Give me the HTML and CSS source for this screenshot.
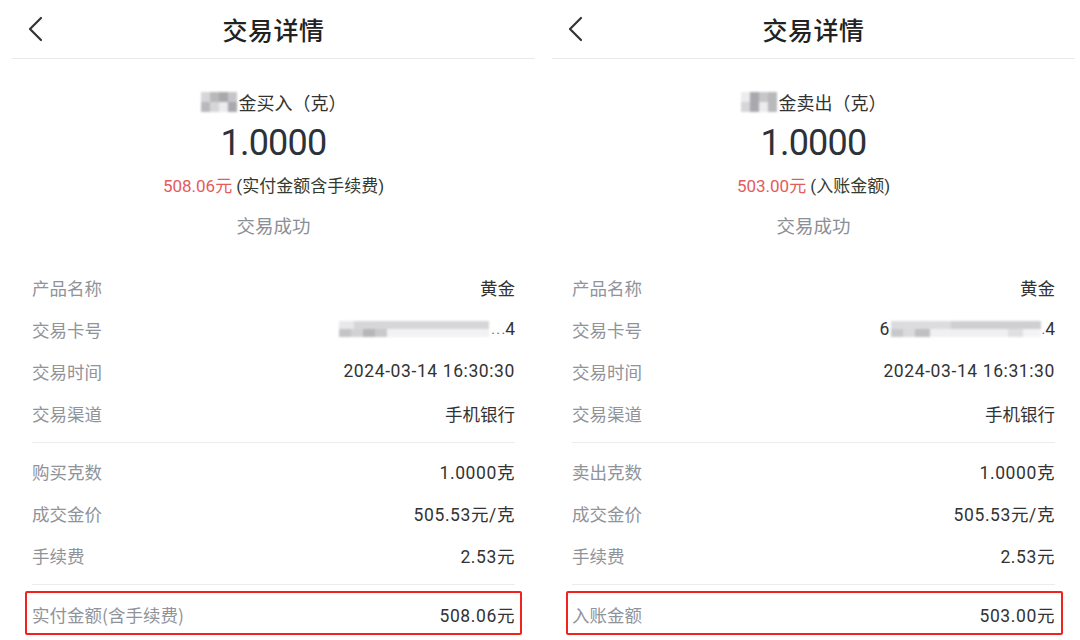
FILE: index.html
```html
<!DOCTYPE html>
<html lang="zh-CN">
<head>
<meta charset="utf-8">
<title>交易详情</title>
<link rel="stylesheet" href="styles.css">
</head>
<body>
<div class="page">
  <section class="panel">
    <header class="topbar">
      <svg class="back" width="16" height="26" viewBox="0 0 16 26"><path d="M13 2 L2 13 L13 24" fill="none" stroke="#333" stroke-width="2.2" stroke-linecap="round" stroke-linejoin="round"/></svg>
      <h1 class="title">交易详情</h1>
      <span></span>
    </header>
    <div class="summary">
      <div class="name"><span class="mosaic m-name"><i class="c1"></i><i class="c2"></i><i class="c3"></i><i class="c4"></i><i class="c2"></i><i class="c1"></i><i class="c5"></i><i class="c3"></i></span>金买入（克）</div>
      <div class="amount">1.0000</div>
      <div class="money"><span class="red">508.06元</span> (实付金额含手续费)</div>
      <div class="status">交易成功</div>
    </div>
    <div class="rows">
      <div class="row"><span class="label">产品名称</span><span class="value">黄金</span></div>
      <div class="row"><span class="label">交易卡号</span><span class="value card"><span class="blur b-left"></span><span class="dots">. . .</span>4</span></div>
      <div class="row"><span class="label">交易时间</span><span class="value num">2024-03-14 16:30:30</span></div>
      <div class="row"><span class="label">交易渠道</span><span class="value">手机银行</span></div>
      <div class="sep"></div>
      <div class="row"><span class="label">购买克数</span><span class="value num">1.0000克</span></div>
      <div class="row"><span class="label">成交金价</span><span class="value num">505.53元/克</span></div>
      <div class="row"><span class="label">手续费</span><span class="value num">2.53元</span></div>
      <div class="sep"></div>
      <div class="row total"><span class="label">实付金额(含手续费)</span><span class="value num">508.06元</span></div>
    </div>
  </section>

  <section class="panel">
    <header class="topbar">
      <svg class="back" width="16" height="26" viewBox="0 0 16 26"><path d="M13 2 L2 13 L13 24" fill="none" stroke="#333" stroke-width="2.2" stroke-linecap="round" stroke-linejoin="round"/></svg>
      <h1 class="title">交易详情</h1>
      <span></span>
    </header>
    <div class="summary">
      <div class="name"><span class="mosaic m-name"><i class="c5"></i><i class="c3"></i><i class="c4"></i><i class="c2"></i><i class="c1"></i><i class="c3"></i><i class="c5"></i><i class="c2"></i></span>金卖出（克）</div>
      <div class="amount">1.0000</div>
      <div class="money"><span class="red">503.00元</span> (入账金额)</div>
      <div class="status">交易成功</div>
    </div>
    <div class="rows">
      <div class="row"><span class="label">产品名称</span><span class="value">黄金</span></div>
      <div class="row"><span class="label">交易卡号</span><span class="value card">6<span class="blur b-right"></span><span class="dots">.</span>4</span></div>
      <div class="row"><span class="label">交易时间</span><span class="value num">2024-03-14 16:31:30</span></div>
      <div class="row"><span class="label">交易渠道</span><span class="value">手机银行</span></div>
      <div class="sep"></div>
      <div class="row"><span class="label">卖出克数</span><span class="value num">1.0000克</span></div>
      <div class="row"><span class="label">成交金价</span><span class="value num">505.53元/克</span></div>
      <div class="row"><span class="label">手续费</span><span class="value num">2.53元</span></div>
      <div class="sep"></div>
      <div class="row total total-r"><span class="label">入账金额</span><span class="value num">503.00元</span></div>
    </div>
  </section>
</div>
</body>
</html>
```
FILE: styles.css
```css
* { box-sizing: border-box; margin: 0; padding: 0; }
html, body { width: 1080px; height: 640px; overflow: hidden; background: #fff; }
body {
  font-family: Roboto, "Noto Sans CJK SC", sans-serif;
  color: #333;
}
.page {
  display: flex;
  gap: 17px;
  padding-left: 12px;
}
.panel {
  width: 523px;
  display: flex;
  flex-direction: column;
}
.topbar {
  height: 59px;
  border-bottom: 1px solid #e9e9eb;
  display: grid;
  grid-template-columns: 1fr auto 1fr;
  align-items: center;
  padding-bottom: 1px;
}
.back { margin-left: 16px; }
.title {
  font-family: "Noto Sans CJK SC", sans-serif;
  font-size: 25px;
  font-weight: 500;
  color: #222;
  letter-spacing: 0.5px;
}
.summary {
  display: flex;
  flex-direction: column;
  align-items: center;
  padding-top: 30px;
}
.name {
  font-family: "Noto Sans CJK SC", sans-serif;
  font-size: 18px;
  line-height: 26px;
  color: #333;
  display: flex;
  align-items: center;
}
.mosaic {
  display: grid;
  grid-template-columns: repeat(4, 9px);
  grid-template-rows: repeat(2, 10px);
  width: 36px;
  margin-right: 2px;
  filter: blur(1px);
}
.mosaic i { display: block; }
.c1 { background: #d6d6d8; }
.c2 { background: #b9b9bc; }
.c3 { background: #a9a9ad; }
.c4 { background: #c6c6c9; }
.c5 { background: #ececee; }
.amount {
  font-size: 36px;
  line-height: 56px;
  color: #2d323a;
  font-weight: 400;
  letter-spacing: -0.8px;
}
.money {
  font-family: Roboto, "Noto Sans CJK SC", sans-serif;
  font-size: 17px;
  line-height: 30px;
  color: #333a2f;
}
.red { color: #e35b5b; }
.status {
  font-family: "Noto Sans CJK SC", sans-serif;
  font-size: 18.5px;
  line-height: 48px;
  color: #8b8f97;
}
.rows {
  margin-top: 17px;
  padding: 0 20px;
  display: flex;
  flex-direction: column;
}
.row {
  height: 42px;
  display: flex;
  justify-content: space-between;
  align-items: center;
  font-size: 17.5px;
}
.label {
  font-family: "Noto Sans CJK SC", sans-serif;
  color: #90939a;
}
.value { color: #333; }
.num { letter-spacing: 0.6px; }
.card { display: flex; align-items: center; }
.blur {
  display: inline-block;
  height: 16px;
  filter: blur(1.2px);
}
.b-left {
  width: 150px;
  margin-right: 2px;
  background:
    linear-gradient(90deg, #c4c4c7 0 8%, #d2d2d4 8% 16%, #b6b6b9 16% 24%, #c9c9cc 24% 32%, #f2f2f3 32% 100%) bottom / 100% 50% no-repeat,
    linear-gradient(90deg, #e8e8ea 0 10%, #d6d6d8 10% 100%) top / 100% 50% no-repeat;
}
.b-right {
  width: 150px;
  margin-left: 2px;
  background:
    linear-gradient(90deg, #c8c8cb 0 8%, #dadadc 8% 16%, #c0c0c3 16% 26%, #f0f0f1 26% 78%, #e0e0e2 78% 88%, #f4f4f5 88% 100%) bottom / 100% 50% no-repeat,
    linear-gradient(90deg, #dcdcde 0 40%, #cfcfd2 40% 100%) top / 100% 50% no-repeat;
}
.dots { color: #666; font-size: 14px; margin-right: 1px; letter-spacing: -1px; }
.sep {
  height: 1px;
  background: #ececee;
  margin: 8px 0 7px;
}
.total {
  position: relative;
  margin-top: 1px;
}
.total::after {
  content: "";
  position: absolute;
  left: -7px;
  right: -7px;
  top: -2px;
  bottom: 0;
  border: 2.5px solid #f2231c;
  border-radius: 2px;
}
.total-r::after { left: -6px; right: -8px; }
```
